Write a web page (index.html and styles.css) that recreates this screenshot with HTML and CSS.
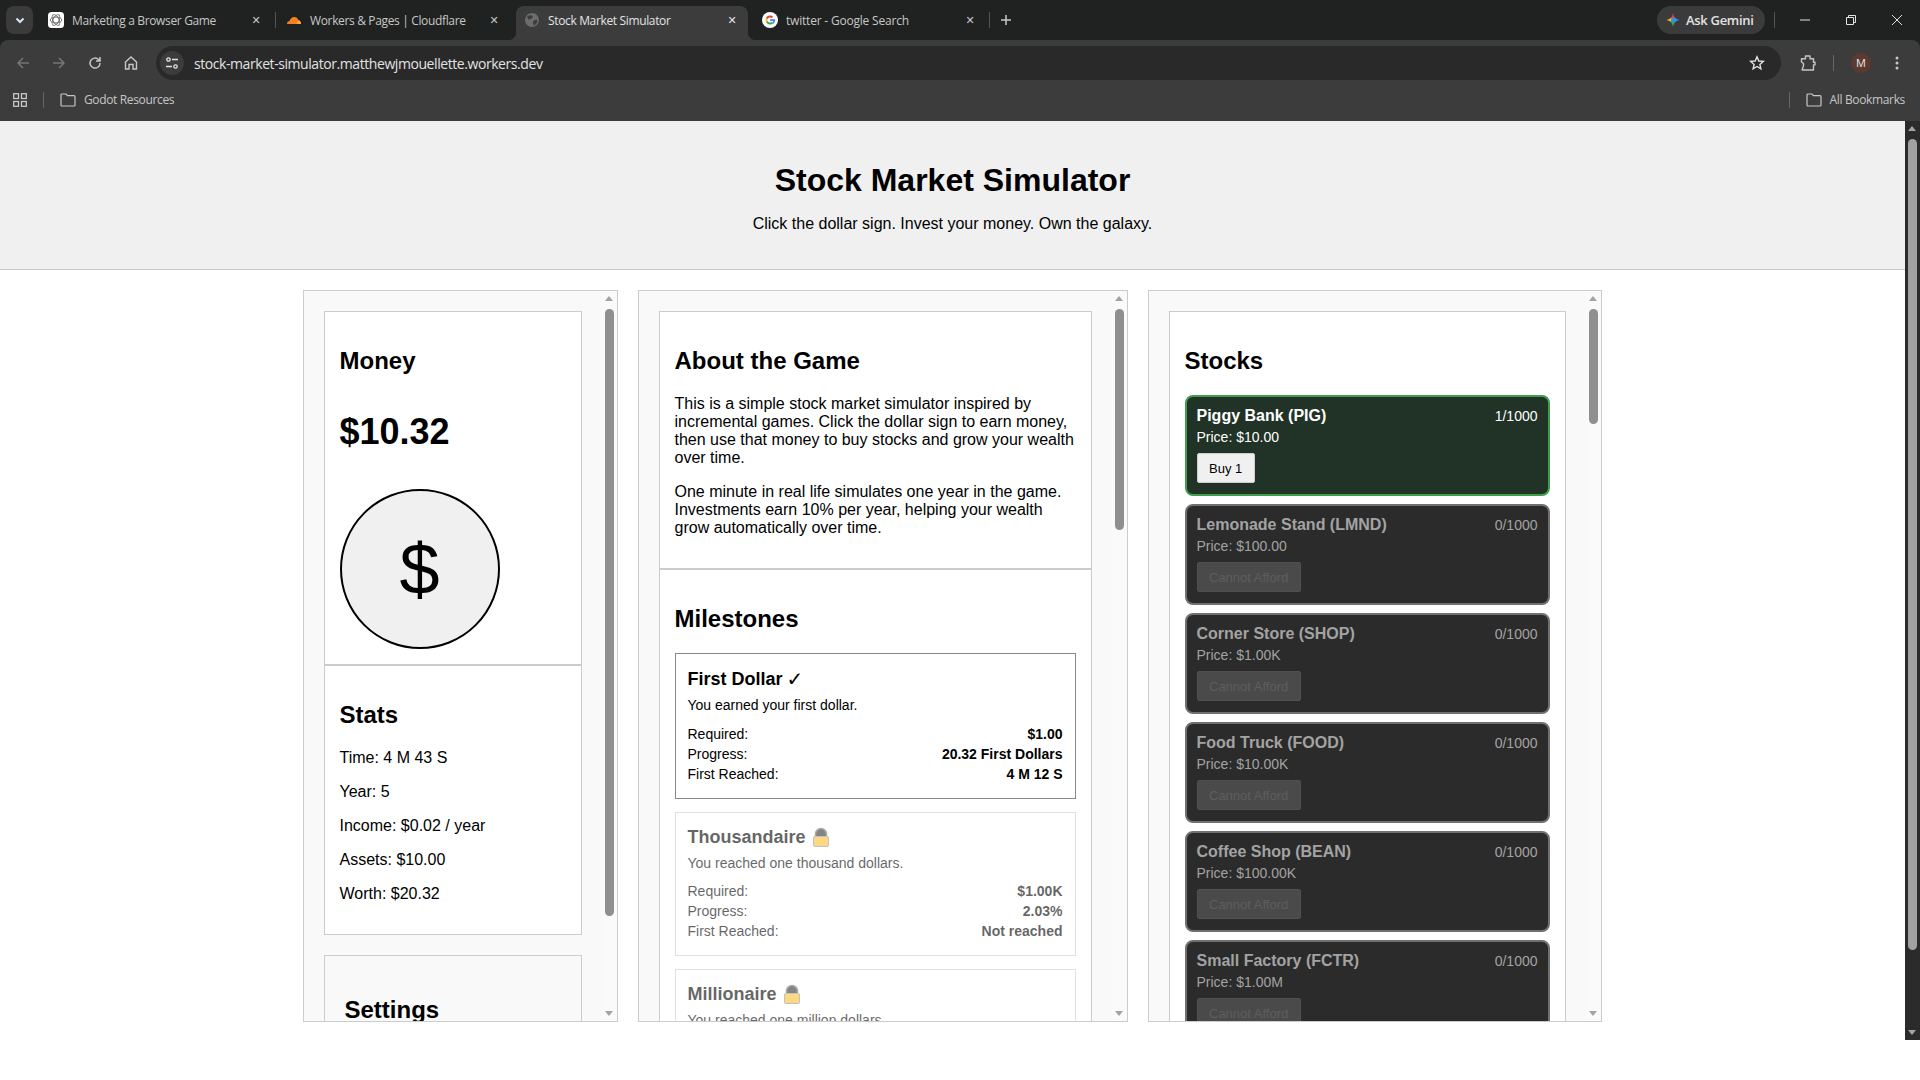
FILE: index.html
```html
<!DOCTYPE html>
<html lang="en">
<head>
  <meta charset="UTF-8">
  <title>Stock Market Simulator</title>
  <link rel="stylesheet" href="styles.css">
</head>
<body>
  <div id="browser-chrome">
    <div id="tab-strip">
      <div id="tab-search">
        <svg width="12" height="12" viewBox="0 0 12 12"><path d="M2.5 4.5 6 8l3.5-3.5" fill="none" stroke="#d5e3f5" stroke-width="2"/></svg>
      </div>
      <div class="tab">
        <svg class="favicon" viewBox="0 0 16 16">
          <rect width="16" height="16" rx="3.5" fill="#fff"/>
          <g fill="none" stroke="#666" stroke-width=".9">
            <ellipse cx="8" cy="8" rx="5.8" ry="3"/>
            <ellipse cx="8" cy="8" rx="5.8" ry="3" transform="rotate(60 8 8)"/>
            <ellipse cx="8" cy="8" rx="5.8" ry="3" transform="rotate(120 8 8)"/>
          </g>
        </svg>
        <span class="tab-title">Marketing a Browser Game</span>
        <span class="tab-close">✕</span>
      </div>
      <div class="tab-gap"></div>
      <div class="tab">
        <svg class="favicon" viewBox="0 0 16 16">
          <path d="M1 12c0-1.700 1.200-2.800 2.600-2.900C4 6.900 5.900 5 8.200 5c1.900 0 3.500 1.200 4.200 3 1.500.100 2.600 1.500 2.600 4z" fill="#f48120"/>
          <path d="M10.500 12c.5-1.600 1-2.700 2.200-3 1.300 0 2.300 1.300 2.300 3z" fill="#faad3f"/>
        </svg>
        <span class="tab-title">Workers &amp; Pages | Cloudflare</span>
        <span class="tab-close">✕</span>
      </div>
      <div class="tab-gap tab-gap-blank"></div>
      <div class="tab tab-active">
        <svg class="favicon" viewBox="0 0 16 16">
          <circle cx="8" cy="8" r="7" fill="#6a6c6e"/>
          <path d="M3 4.500 6.500 3 9 4.500 7 7 4.500 7.500zM9 9l3.500-1.500L13.500 10 10.500 13.500 9 12z" fill="#3c3c3c"/>
        </svg>
        <span class="tab-title">Stock Market Simulator</span>
        <span class="tab-close">✕</span>
      </div>
      <div class="tab-gap tab-gap-blank"></div>
      <div class="tab tab-last">
        <svg class="favicon" viewBox="0 0 16 16">
          <circle cx="8" cy="8" r="8" fill="#fff"/>
          <path d="M11.300 9H8V7.200h5.100c.1 1 0 1.800-.3 2.500l-1.200 2.100-1.400-1.100z" fill="#4285f4"/>
          <path d="M4.800 9.400A3.600 3.600 0 0 0 10.500 10.600" fill="none" stroke="#34a853" stroke-width="1.900"/>
          <path d="M4.800 9.500a3.600 3.600 0 0 1 0-3" fill="none" stroke="#fbbc05" stroke-width="1.900"/>
          <path d="M4.800 6.500A3.600 3.600 0 0 1 10.500 5.400" fill="none" stroke="#ea4335" stroke-width="1.900"/>
        </svg>
        <span class="tab-title">twitter - Google Search</span>
        <span class="tab-close">✕</span>
      </div>
      <div class="tab-gap"></div>
      <div id="new-tab">
        <svg width="12" height="12" viewBox="0 0 12 12"><path d="M6 1v10M1 6h10" stroke="#c7c7c7" stroke-width="1.500"/></svg>
      </div>
      <div class="strip-spacer"></div>
      <div id="ask-gemini">
        <svg width="14" height="14" viewBox="0 0 14 14">
          <path d="M7 0c.4 2.600 1.400 4.500 3.200 5.800L7 7 3.800 5.800C5.600 4.500 6.600 2.600 7 0z" fill="#ea4335"/>
          <path d="M0 7c2-.4 3.500-.6 4.800-2.200L7 7l-2.200 2.200C3.500 7.600 2 7.400 0 7z" fill="#fbbc05"/>
          <path d="M14 7c-2-.4-3.500-.6-4.800-2.200L7 7l2.200 2.200C10.500 7.600 12 7.400 14 7z" fill="#4285f4"/>
          <path d="M7 14c-.4-2.600-1.400-4.500-3.200-5.800L7 7l3.200 1.200C8.400 9.500 7.400 11.400 7 14z" fill="#34a853"/>
          <circle cx="7.400" cy="7" r="2.400" fill="#2f8ff0"/>
        </svg>
        <span>Ask Gemini</span>
      </div>
      <div class="strip-divider"></div>
      <div class="window-button">
        <svg width="12" height="12" viewBox="0 0 12 12"><path d="M1 6h10" stroke="#e3e3e3"/></svg>
      </div>
      <div class="window-button">
        <svg width="12" height="12" viewBox="0 0 12 12"><path d="M1.500 3.500h7v7h-7zM3.500 3.500v-2h7v7h-2" fill="none" stroke="#e3e3e3"/></svg>
      </div>
      <div class="window-button">
        <svg width="12" height="12" viewBox="0 0 12 12"><path d="M1 1l10 10M11 1 1 11" stroke="#e3e3e3"/></svg>
      </div>
    </div>

    <div id="toolbar">
      <div class="tool-button">
        <svg width="16" height="16" viewBox="0 0 16 16"><path d="M14 8H3M8 3 3 8l5 5" fill="none" stroke="#757575" stroke-width="1.500"/></svg>
      </div>
      <div class="tool-button">
        <svg width="16" height="16" viewBox="0 0 16 16"><path d="M2 8h11M8 3l5 5-5 5" fill="none" stroke="#757575" stroke-width="1.500"/></svg>
      </div>
      <div class="tool-button">
        <svg width="16" height="16" viewBox="0 0 16 16"><path d="M13 8a5 5 0 1 1-1.500-3.500L13 6M13 2v4H9" fill="none" stroke="#c7c7c7" stroke-width="1.500"/></svg>
      </div>
      <div class="tool-button">
        <svg width="16" height="16" viewBox="0 0 16 16"><path d="M2.500 7 8 2l5.500 5v7H10V9.500H6V14H2.500z" fill="none" stroke="#c7c7c7" stroke-width="1.400"/></svg>
      </div>
      <div id="address-bar">
        <div id="site-settings">
          <svg width="14" height="14" viewBox="0 0 14 14"><g fill="none" stroke="#e3e3e3" stroke-width="1.300"><circle cx="3.500" cy="3.500" r="1.700"/><path d="M7 3.500h6M1 10.500h6"/><circle cx="10.500" cy="10.500" r="1.700"/></g></svg>
        </div>
        <span id="address-text">stock-market-simulator.matthewjmouellette.workers.dev</span>
        <svg id="bookmark-star" width="16" height="16" viewBox="0 0 16 16"><path d="M8 1.800 9.800 6l4.500.4-3.400 3 1 4.400L8 11.500 4.100 13.800l1-4.400-3.400-3L6.200 6z" fill="none" stroke="#e3e3e3" stroke-width="1.400"/></svg>
      </div>
      <div class="tool-button extensions-button">
        <svg width="16" height="16" viewBox="0 0 16 16"><path d="M1.500 3.700H5.500V1h4.500v2.700h3.500v3.600H15v2.600h-1.500V15H2.200v-.8L3.500 11V8.500L1.500 7z" fill="none" stroke="#c7c7c7" stroke-width="1.400" stroke-linejoin="round"/></svg>
      </div>
      <div class="toolbar-divider"></div>
      <div class="tool-button avatar-button"><span id="avatar">M</span></div>
      <div class="tool-button">
        <svg width="16" height="16" viewBox="0 0 16 16"><g fill="#c7c7c7"><circle cx="8" cy="3" r="1.500"/><circle cx="8" cy="8" r="1.500"/><circle cx="8" cy="13" r="1.500"/></g></svg>
      </div>
    </div>

    <div id="bookmarks-bar">
      <svg class="apps-icon" width="14" height="14" viewBox="0 0 14 14"><g fill="none" stroke="#c7c7c7" stroke-width="1.300"><rect x=".7" y=".7" width="4.800" height="4.800"/><rect x="8.500" y=".7" width="4.800" height="4.800"/><rect x=".7" y="8.500" width="4.800" height="4.800"/><rect x="8.500" y="8.500" width="4.800" height="4.800"/></g></svg>
      <div class="bookmark-divider"></div>
      <svg class="folder-icon" width="16" height="14" viewBox="0 0 16 14"><path d="M1 2a1 1 0 0 1 1-1h4l1.500 1.700H14a1 1 0 0 1 1 1V12a1 1 0 0 1-1 1H2a1 1 0 0 1-1-1z" fill="none" stroke="#c7c7c7" stroke-width="1.200"/></svg>
      <span class="bookmark-label">Godot Resources</span>
      <div class="strip-spacer"></div>
      <div class="bookmark-divider"></div>
      <svg class="folder-icon all-bookmarks-icon" width="16" height="14" viewBox="0 0 16 14"><path d="M1 2a1 1 0 0 1 1-1h4l1.500 1.700H14a1 1 0 0 1 1 1V12a1 1 0 0 1-1 1H2a1 1 0 0 1-1-1z" fill="none" stroke="#c7c7c7" stroke-width="1.200"/></svg>
      <span class="bookmark-label">All Bookmarks</span>
    </div>
  </div>

  <div id="viewport">
    <div id="page">
      <header id="page-header">
        <h1>Stock Market Simulator</h1>
        <p>Click the dollar sign. Invest your money. Own the galaxy.</p>
      </header>

      <main id="game-columns">
        <div class="panel">
          <div class="panel-content">
            <section class="card">
              <h2>Money</h2>
              <p class="money-amount">$10.32</p>
              <button class="dollar-button">$</button>
            </section>
            <section class="card">
              <h2>Stats</h2>
              <p>Time: 4 M 43 S</p>
              <p>Year: 5</p>
              <p>Income: $0.02 / year</p>
              <p>Assets: $10.00</p>
              <p>Worth: $20.32</p>
            </section>
            <section class="card settings-card">
              <h2>Settings</h2>
            </section>
          </div>
          <div class="scrollbar">
            <div class="scroll-arrow-up"></div>
            <div class="scroll-track"><div class="scroll-thumb thumb-money"></div></div>
            <div class="scroll-arrow-down"></div>
          </div>
        </div>

        <div class="panel">
          <div class="panel-content">
            <section class="card">
              <h2>About the Game</h2>
              <p>This is a simple stock market simulator inspired by incremental games. Click the dollar sign to earn money, then use that money to buy stocks and grow your wealth over time.</p>
              <p>One minute in real life simulates one year in the game. Investments earn 10% per year, helping your wealth grow automatically over time.</p>
            </section>
            <section class="card">
              <h2>Milestones</h2>
              <div class="milestone milestone-done">
                <div class="milestone-title">First Dollar <span class="check-mark">✓</span></div>
                <p class="milestone-desc">You earned your first dollar.</p>
                <div class="milestone-row"><span>Required:</span><strong>$1.00</strong></div>
                <div class="milestone-row"><span>Progress:</span><strong>20.32 First Dollars</strong></div>
                <div class="milestone-row"><span>First Reached:</span><strong>4 M 12 S</strong></div>
              </div>
              <div class="milestone milestone-locked">
                <div class="milestone-title">Thousandaire
                  <svg class="lock-icon" width="16" height="20" viewBox="0 0 16 20"><path d="M2.500 10V7a5.500 5.500 0 0 1 11 0v3z" fill="#333" stroke="#777" stroke-width="1.500"/><rect x=".5" y="9.500" width="15" height="10" rx="1.500" fill="#fbc02d" stroke="#999"/></svg>
                </div>
                <p class="milestone-desc">You reached one thousand dollars.</p>
                <div class="milestone-row"><span>Required:</span><strong>$1.00K</strong></div>
                <div class="milestone-row"><span>Progress:</span><strong>2.03%</strong></div>
                <div class="milestone-row"><span>First Reached:</span><strong>Not reached</strong></div>
              </div>
              <div class="milestone milestone-locked">
                <div class="milestone-title">Millionaire
                  <svg class="lock-icon" width="16" height="20" viewBox="0 0 16 20"><path d="M2.500 10V7a5.500 5.500 0 0 1 11 0v3z" fill="#333" stroke="#777" stroke-width="1.500"/><rect x=".5" y="9.500" width="15" height="10" rx="1.500" fill="#fbc02d" stroke="#999"/></svg>
                </div>
                <p class="milestone-desc">You reached one million dollars.</p>
              </div>
            </section>
          </div>
          <div class="scrollbar">
            <div class="scroll-arrow-up"></div>
            <div class="scroll-track"><div class="scroll-thumb thumb-about"></div></div>
            <div class="scroll-arrow-down"></div>
          </div>
        </div>

        <div class="panel">
          <div class="panel-content">
            <section class="card">
              <h2>Stocks</h2>
              <div class="stock stock-owned">
                <div class="stock-head"><strong>Piggy Bank (PIG)</strong><span>1/1000</span></div>
                <div class="stock-price">Price: $10.00</div>
                <button class="stock-button">Buy 1</button>
              </div>
              <div class="stock">
                <div class="stock-head"><strong>Lemonade Stand (LMND)</strong><span>0/1000</span></div>
                <div class="stock-price">Price: $100.00</div>
                <button class="stock-button" disabled>Cannot Afford</button>
              </div>
              <div class="stock">
                <div class="stock-head"><strong>Corner Store (SHOP)</strong><span>0/1000</span></div>
                <div class="stock-price">Price: $1.00K</div>
                <button class="stock-button" disabled>Cannot Afford</button>
              </div>
              <div class="stock">
                <div class="stock-head"><strong>Food Truck (FOOD)</strong><span>0/1000</span></div>
                <div class="stock-price">Price: $10.00K</div>
                <button class="stock-button" disabled>Cannot Afford</button>
              </div>
              <div class="stock">
                <div class="stock-head"><strong>Coffee Shop (BEAN)</strong><span>0/1000</span></div>
                <div class="stock-price">Price: $100.00K</div>
                <button class="stock-button" disabled>Cannot Afford</button>
              </div>
              <div class="stock">
                <div class="stock-head"><strong>Small Factory (FCTR)</strong><span>0/1000</span></div>
                <div class="stock-price">Price: $1.00M</div>
                <button class="stock-button" disabled>Cannot Afford</button>
              </div>
            </section>
          </div>
          <div class="scrollbar">
            <div class="scroll-arrow-up"></div>
            <div class="scroll-track"><div class="scroll-thumb thumb-stocks"></div></div>
            <div class="scroll-arrow-down"></div>
          </div>
        </div>
      </main>
    </div>

    <div id="page-scrollbar">
      <div class="scroll-arrow-up"></div>
      <div class="scroll-track"><div class="scroll-thumb"></div></div>
      <div class="scroll-arrow-down"></div>
    </div>
  </div>
</body>
</html>
```

FILE: styles.css
```css
body {
  margin: 0;
  height: 1080px;
  overflow: hidden;
  background-color: #fff;
  color: #000;
  font-family: "Liberation Sans", Arial, sans-serif;
}

/* browser chrome */

#browser-chrome {
  height: 121px;
  background-color: #202221;
  font-family: "Open Sans", sans-serif;
  color: #c7c7c7;
}

#tab-strip {
  height: 40px;
  display: flex;
  align-items: flex-end;
  padding-left: 6px;
}

#tab-search {
  width: 27px;
  height: 28px;
  margin-bottom: 6px;
  margin-right: 7px;
  display: flex;
  align-items: center;
  justify-content: center;
  background-color: #3b3b3b;
  border-radius: 8px;
}

.tab {
  width: 232px;
  height: 34px;
  box-sizing: border-box;
  padding: 0 8px 6px;
  display: flex;
  align-items: center;
  gap: 8px;
  position: relative;
  font-size: 12px;
  border-radius: 8px 8px 0 0;
}

.tab-active {
  background-color: #3c3c3c;
  color: #e3e3e3;
  padding-bottom: 6px;
}

.tab-active::before,
.tab-active::after {
  content: "";
  position: absolute;
  bottom: 0;
  width: 8px;
  height: 8px;
}

.tab-active::before {
  left: -8px;
  background: radial-gradient(circle at 0 0, #202221 8px, #3c3c3c 8.5px);
}

.tab-active::after {
  right: -8px;
  background: radial-gradient(circle at 100% 0, #202221 8px, #3c3c3c 8.5px);
}

.favicon {
  width: 16px;
  height: 16px;
  flex: none;
}

.tab-title {
  flex: 1;
  white-space: nowrap;
  letter-spacing: -0.35px;
}

.tab-last .tab-title {
  letter-spacing: -0.2px;
}

.tab-close {
  width: 16px;
  text-align: center;
  font-size: 11px;
  font-family: "DejaVu Sans", sans-serif;
}

.tab-gap {
  width: 6px;
  height: 16px;
  margin-bottom: 12px;
  position: relative;
}

.tab-gap::after {
  content: "";
  position: absolute;
  left: 3px;
  width: 1px;
  height: 100%;
  background-color: #555;
}

.tab-gap-blank::after {
  display: none;
}

#new-tab {
  width: 28px;
  height: 28px;
  margin-bottom: 6px;
  display: flex;
  align-items: center;
  justify-content: center;
}

.strip-spacer {
  flex: 1;
}

#ask-gemini {
  width: 108px;
  height: 28px;
  box-sizing: border-box;
  margin-bottom: 6px;
  padding-left: 9px;
  display: flex;
  align-items: center;
  gap: 6px;
  background-color: #3b3b3b;
  border-radius: 14px;
  font-size: 13px;
  font-weight: 600;
  letter-spacing: -0.3px;
  color: #e3e3e3;
}

.strip-divider {
  width: 1px;
  height: 16px;
  margin: 0 7px 12px 9px;
  background-color: #555;
}

.window-button {
  width: 46px;
  height: 28px;
  margin-bottom: 6px;
  display: flex;
  align-items: center;
  justify-content: center;
}

#toolbar {
  height: 40px;
  box-sizing: border-box;
  padding: 6px 5px 0 5px;
  display: flex;
  background-color: #3c3c3c;
  border-radius: 8px 8px 0 0;
}

.tool-button {
  width: 36px;
  height: 34px;
  display: flex;
  align-items: center;
  justify-content: center;
  flex: none;
}

#address-bar {
  flex: 1;
  height: 34px;
  margin-left: 7px;
  padding: 0 16px 0 4px;
  display: flex;
  align-items: center;
  background-color: #292929;
  border-radius: 17px;
}

#site-settings {
  width: 24px;
  height: 24px;
  display: flex;
  align-items: center;
  justify-content: center;
  background-color: #3c3c3c;
  border-radius: 50%;
}

#address-text {
  flex: 1;
  margin-left: 10px;
  font-size: 14px;
  letter-spacing: -0.43px;
  color: #e3e3e3;
}

.extensions-button {
  margin-left: 9px;
}

.toolbar-divider {
  width: 1px;
  height: 16px;
  margin: 9px 0 0 7px;
  background-color: #666;
}

.avatar-button {
  margin-left: 9px;
}

#avatar {
  width: 20px;
  height: 20px;
  line-height: 20px;
  text-align: center;
  background-color: #5c3a30;
  border-radius: 50%;
  font-size: 11px;
  color: #e8e8e8;
}

#bookmarks-bar {
  height: 41px;
  box-sizing: border-box;
  padding: 0 15px 2px 13px;
  display: flex;
  align-items: center;
  background-color: #3c3c3c;
}

.bookmark-divider {
  width: 1px;
  height: 16px;
  margin: 0 16px;
  background-color: #666;
}

.folder-icon {
  margin-right: 8px;
}

.bookmark-label {
  font-size: 12px;
  letter-spacing: -0.35px;
}

/* page */

#viewport {
  display: flex;
  height: 919px;
}

#page {
  flex: 1;
  overflow: hidden;
}

#page-header {
  padding: 41px 20px 36px;
  text-align: center;
  background-color: #f0f0f0;
  border-bottom: 1px solid #ccc;
}

#page-header h1 {
  margin: 0 0 16px;
  font-size: 32px;
}

#page-header p {
  margin: 0;
  font-size: 16px;
}

#game-columns {
  width: 1300px;
  margin: 0 auto;
  padding-top: 20px;
  display: grid;
  grid-template-columns: 315px 490px 454px;
  gap: 20px;
}

.panel {
  height: 732px;
  box-sizing: border-box;
  display: flex;
  overflow: hidden;
  background-color: #f9f9f9;
  border: 1px solid #ccc;
}

.panel-content {
  flex: 1;
  min-width: 0;
  padding: 20px;
}

.scrollbar {
  width: 15px;
  flex: none;
  display: flex;
  flex-direction: column;
  background-color: #fafafa;
}

.scroll-arrow-up,
.scroll-arrow-down {
  height: 15px;
  flex: none;
  position: relative;
}

.scroll-arrow-up::after,
.scroll-arrow-down::after {
  content: "";
  position: absolute;
  left: 3px;
  top: 5px;
  border-left: 4.5px solid transparent;
  border-right: 4.5px solid transparent;
}

.scroll-arrow-up::after {
  border-bottom: 5px solid #a3a3a3;
}

.scroll-arrow-down::after {
  border-top: 5px solid #a3a3a3;
}

.scroll-track {
  flex: 1;
  padding-top: 3px;
}

.scroll-thumb {
  width: 9px;
  margin-left: 3px;
  border-radius: 5px;
  background-color: #8f8f8f;
}

.thumb-money {
  height: 607px;
}

.thumb-about {
  height: 221px;
}

.thumb-stocks {
  height: 115px;
}

#page-scrollbar {
  width: 15px;
  display: flex;
  flex-direction: column;
  background-color: #2b2b2b;
}

#page-scrollbar .scroll-thumb {
  height: 811px;
  background-color: #a1a1a1;
}

.card {
  padding: 15px;
  background-color: #fff;
  border: 1px solid #ccc;
}

.card h2 {
  font-size: 24px;
}

.settings-card {
  margin-top: 20px;
  padding: 20px;
  background-color: #f9f9f9;
}

.money-amount {
  margin: 36px 0;
  font-size: 36px;
  font-weight: bold;
}

.dollar-button {
  display: block;
  width: 160px;
  height: 160px;
  padding: 0;
  background-color: #f0f0f0;
  border: 2px solid #000;
  border-radius: 50%;
  font-family: inherit;
  font-size: 72px;
  color: #000;
}

/* milestones */

.milestone {
  padding: 14px 12px;
  background-color: #fff;
  border: 1px solid #888;
}

.milestone + .milestone {
  margin-top: 13px;
}

.milestone-title {
  height: 21px;
  display: flex;
  align-items: center;
  gap: 7px;
  font-size: 18px;
  font-weight: bold;
  white-space: nowrap;
}

.milestone-done .milestone-title {
  margin-top: 1px;
  gap: 4px;
}

.check-mark {
  font-family: "DejaVu Sans", sans-serif;
  font-size: 20px;
  font-weight: normal;
}

.milestone-desc {
  margin: 7px 0 10px;
  font-size: 14px;
}

.milestone-done .milestone-desc {
  margin: 7px 0 11px;
}

.milestone-row {
  display: flex;
  justify-content: space-between;
  font-size: 14px;
  line-height: 20px;
}

.milestone-locked {
  border-color: #ccc;
  opacity: 0.6;
}

.lock-icon {
  flex: none;
}

/* stocks */

.stock {
  height: 101px;
  box-sizing: border-box;
  margin-bottom: 8px;
  padding: 10px;
  background-color: #2b2b2b;
  border: 2px solid #707070;
  border-radius: 8px;
  color: #a3a3a3;
}

.stock-owned {
  background-color: #203326;
  border-color: #3f9d4c;
  color: #fff;
}

.stock-head {
  display: flex;
  justify-content: space-between;
  align-items: center;
  font-size: 14px;
}

.stock-head strong {
  font-size: 16px;
}

.stock-price {
  margin-top: 4px;
  font-size: 14px;
}

.stock-button {
  display: block;
  height: 30px;
  margin-top: 8px;
  padding: 1px 11.5px 0;
  background-color: #f0f0f0;
  border: 1px solid #ccc;
  border-radius: 2px;
  font-family: inherit;
  font-size: 13px;
  color: #000;
}

.stock-button:disabled {
  background-color: #4a4a4a;
  border-color: #505050;
  color: #5e5e5e;
}
```
